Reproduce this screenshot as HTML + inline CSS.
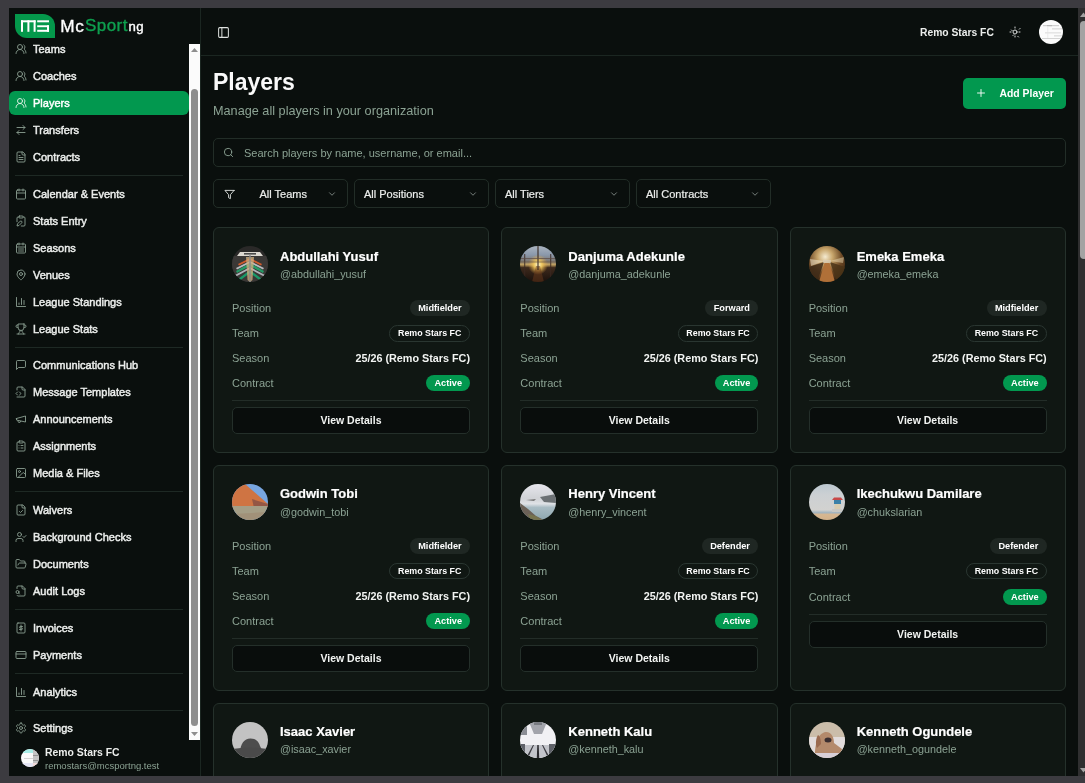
<!DOCTYPE html>
<html><head><meta charset="utf-8">
<style>
*{box-sizing:border-box;margin:0;padding:0}
html,body{width:1085px;height:783px;overflow:hidden;background:#3c3b40;font-family:"Liberation Sans",sans-serif;position:relative}
#root{position:absolute;left:0;top:0;width:1085px;height:783px;will-change:transform}
.abs{position:absolute}
</style></head>
<body><div id="root">
<div class="abs" style="left:9px;top:8px;width:1069px;height:768px;background:#0a0f0d"></div>
<div class="abs" style="left:9px;top:8px;width:191px;height:768px;background:#0a0f0d"></div>
<div class="abs" style="left:200px;top:8px;width:1px;height:768px;background:#1b2621"></div>
<div class="abs" style="left:15px;top:14px;width:40px;height:24px;background:#04984b;border-radius:0 12px 0 12px"></div>
<svg class="abs" style="left:15px;top:14px" width="40" height="24" viewBox="0 0 40 24"><g fill="#fff"><rect x="6" y="6.3" width="14.6" height="2"/><rect x="6" y="6.3" width="2" height="11.5"/><rect x="12.4" y="6.3" width="2" height="11.5"/><rect x="18.6" y="6.3" width="2" height="11.5"/><rect x="22.2" y="6.3" width="11.8" height="2"/><rect x="22.2" y="11.3" width="11.8" height="1.9"/><rect x="32" y="11.3" width="2" height="6.5"/><rect x="22.2" y="15.8" width="11.8" height="2"/></g></svg>
<div class="abs" style="left:60.3px;top:15.74px;font-size:17.2px;line-height:20px;color:#fff;letter-spacing:0.55px;-webkit-text-stroke:0.35px #fff;white-space:nowrap">Mc</div>
<div class="abs" style="left:85px;top:15.81px;font-size:17px;line-height:20px;color:#0ea04f;letter-spacing:0.45px;-webkit-text-stroke:0.35px #0ea04f;white-space:nowrap">Sport</div>
<div class="abs" style="left:128.5px;top:17.13px;font-size:13.2px;line-height:20px;color:#fff;letter-spacing:0.3px;-webkit-text-stroke:0.35px #fff;white-space:nowrap">ng</div>
<div class="abs" style="left:9px;top:44px;width:191px;height:696px;overflow:hidden">
<svg class="abs" style="left:5.5px;top:-1px" width="12" height="12" viewBox="0 0 24 24" fill="none" stroke="#8a9e91" stroke-width="1.8" stroke-linecap="round" stroke-linejoin="round"><path d="M18 21a8 8 0 0 0-16 0"/><circle cx="10" cy="8" r="5"/><path d="M22 20c0-3.37-2-6.5-4-8a5 5 0 0 0-.45-8.3"/></svg>
<div class="abs" style="left:24px;top:-2px;font-size:11px;line-height:14px;color:#eceeec;white-space:nowrap;-webkit-text-stroke:0.45px #eceeec">Teams</div>
<svg class="abs" style="left:5.5px;top:26px" width="12" height="12" viewBox="0 0 24 24" fill="none" stroke="#8a9e91" stroke-width="1.8" stroke-linecap="round" stroke-linejoin="round"><path d="M18 21a8 8 0 0 0-16 0"/><circle cx="10" cy="8" r="5"/><path d="M22 20c0-3.37-2-6.5-4-8a5 5 0 0 0-.45-8.3"/></svg>
<div class="abs" style="left:24px;top:25px;font-size:11px;line-height:14px;color:#eceeec;white-space:nowrap;-webkit-text-stroke:0.45px #eceeec">Coaches</div>
<div class="abs" style="left:0px;top:47px;width:180px;height:23.8px;background:#02984f;border-radius:6px"></div>
<svg class="abs" style="left:5.5px;top:53px" width="12" height="12" viewBox="0 0 24 24" fill="none" stroke="#e8f5ec" stroke-width="1.8" stroke-linecap="round" stroke-linejoin="round"><path d="M18 21a8 8 0 0 0-16 0"/><circle cx="10" cy="8" r="5"/><path d="M22 20c0-3.37-2-6.5-4-8a5 5 0 0 0-.45-8.3"/></svg>
<div class="abs" style="left:24px;top:52px;font-size:11px;line-height:14px;color:#ffffff;white-space:nowrap;-webkit-text-stroke:0.45px #ffffff">Players</div>
<svg class="abs" style="left:5.5px;top:80px" width="12" height="12" viewBox="0 0 24 24" fill="none" stroke="#8a9e91" stroke-width="1.8" stroke-linecap="round" stroke-linejoin="round"><path d="m16 3 4 4-4 4"/><path d="M20 7H4"/><path d="m8 21-4-4 4-4"/><path d="M4 17h16"/></svg>
<div class="abs" style="left:24px;top:79px;font-size:11px;line-height:14px;color:#eceeec;white-space:nowrap;-webkit-text-stroke:0.45px #eceeec">Transfers</div>
<svg class="abs" style="left:5.5px;top:107px" width="12" height="12" viewBox="0 0 24 24" fill="none" stroke="#8a9e91" stroke-width="1.8" stroke-linecap="round" stroke-linejoin="round"><path d="M15 2H6a2 2 0 0 0-2 2v16a2 2 0 0 0 2 2h12a2 2 0 0 0 2-2V7Z"/><path d="M14 2v4a2 2 0 0 0 2 2h4"/><path d="M10 9H8"/><path d="M16 13H8"/><path d="M16 17H8"/></svg>
<div class="abs" style="left:24px;top:106px;font-size:11px;line-height:14px;color:#eceeec;white-space:nowrap;-webkit-text-stroke:0.45px #eceeec">Contracts</div>
<svg class="abs" style="left:5.5px;top:144px" width="12" height="12" viewBox="0 0 24 24" fill="none" stroke="#8a9e91" stroke-width="1.8" stroke-linecap="round" stroke-linejoin="round"><rect width="18" height="18" x="3" y="4" rx="2"/><path d="M16 2v4"/><path d="M8 2v4"/><path d="M3 10h18"/></svg>
<div class="abs" style="left:24px;top:143px;font-size:11px;line-height:14px;color:#eceeec;white-space:nowrap;-webkit-text-stroke:0.45px #eceeec">Calendar &amp; Events</div>
<svg class="abs" style="left:5.5px;top:171px" width="12" height="12" viewBox="0 0 24 24" fill="none" stroke="#8a9e91" stroke-width="1.8" stroke-linecap="round" stroke-linejoin="round"><rect width="8" height="4" x="8" y="2" rx="1"/><path d="M10.4 12.6a2 2 0 0 1 3 3L8 21l-4 1 1-4Z"/><path d="M16 4h2a2 2 0 0 1 2 2v14a2 2 0 0 1-2 2h-5.5"/><path d="M4 13.5V6a2 2 0 0 1 2-2h2"/></svg>
<div class="abs" style="left:24px;top:170px;font-size:11px;line-height:14px;color:#eceeec;white-space:nowrap;-webkit-text-stroke:0.45px #eceeec">Stats Entry</div>
<svg class="abs" style="left:5.5px;top:198px" width="12" height="12" viewBox="0 0 24 24" fill="none" stroke="#8a9e91" stroke-width="1.8" stroke-linecap="round" stroke-linejoin="round"><rect width="18" height="18" x="3" y="4" rx="2"/><path d="M16 2v4M8 2v4M3 10h18M7 14h10M7 18h10"/></svg>
<div class="abs" style="left:24px;top:197px;font-size:11px;line-height:14px;color:#eceeec;white-space:nowrap;-webkit-text-stroke:0.45px #eceeec">Seasons</div>
<svg class="abs" style="left:5.5px;top:225px" width="12" height="12" viewBox="0 0 24 24" fill="none" stroke="#8a9e91" stroke-width="1.8" stroke-linecap="round" stroke-linejoin="round"><path d="M20 10c0 6-8 12-8 12s-8-6-8-12a8 8 0 0 1 16 0Z"/><circle cx="12" cy="10" r="3"/></svg>
<div class="abs" style="left:24px;top:224px;font-size:11px;line-height:14px;color:#eceeec;white-space:nowrap;-webkit-text-stroke:0.45px #eceeec">Venues</div>
<svg class="abs" style="left:5.5px;top:252px" width="12" height="12" viewBox="0 0 24 24" fill="none" stroke="#8a9e91" stroke-width="1.8" stroke-linecap="round" stroke-linejoin="round"><path d="M3 3v18h18"/><path d="M18 17V9"/><path d="M13 17V5"/><path d="M8 17v-3"/></svg>
<div class="abs" style="left:24px;top:251px;font-size:11px;line-height:14px;color:#eceeec;white-space:nowrap;-webkit-text-stroke:0.45px #eceeec">League Standings</div>
<svg class="abs" style="left:5.5px;top:279px" width="12" height="12" viewBox="0 0 24 24" fill="none" stroke="#8a9e91" stroke-width="1.8" stroke-linecap="round" stroke-linejoin="round"><path d="M6 9H4.5a2.5 2.5 0 0 1 0-5H6"/><path d="M18 9h1.5a2.5 2.5 0 0 0 0-5H18"/><path d="M4 22h16"/><path d="M10 14.66V17c0 .55-.47.98-.97 1.21C7.85 18.75 7 20.24 7 22"/><path d="M14 14.66V17c0 .55.47.98.97 1.21C16.15 18.75 17 20.24 17 22"/><path d="M18 2H6v7a6 6 0 0 0 12 0V2Z"/></svg>
<div class="abs" style="left:24px;top:278px;font-size:11px;line-height:14px;color:#eceeec;white-space:nowrap;-webkit-text-stroke:0.45px #eceeec">League Stats</div>
<svg class="abs" style="left:5.5px;top:315px" width="12" height="12" viewBox="0 0 24 24" fill="none" stroke="#8a9e91" stroke-width="1.8" stroke-linecap="round" stroke-linejoin="round"><path d="M21 15a2 2 0 0 1-2 2H7l-4 4V5a2 2 0 0 1 2-2h14a2 2 0 0 1 2 2z"/></svg>
<div class="abs" style="left:24px;top:314px;font-size:11px;line-height:14px;color:#eceeec;white-space:nowrap;-webkit-text-stroke:0.45px #eceeec">Communications Hub</div>
<svg class="abs" style="left:5.5px;top:342px" width="12" height="12" viewBox="0 0 24 24" fill="none" stroke="#8a9e91" stroke-width="1.8" stroke-linecap="round" stroke-linejoin="round"><path d="M4 22h14a2 2 0 0 0 2-2V7l-5-5H6a2 2 0 0 0-2 2v4"/><path d="M14 2v4a2 2 0 0 0 2 2h4"/><path d="m5 12-3 3 3 3"/><path d="m9 18 3-3-3-3"/></svg>
<div class="abs" style="left:24px;top:341px;font-size:11px;line-height:14px;color:#eceeec;white-space:nowrap;-webkit-text-stroke:0.45px #eceeec">Message Templates</div>
<svg class="abs" style="left:5.5px;top:369px" width="12" height="12" viewBox="0 0 24 24" fill="none" stroke="#8a9e91" stroke-width="1.8" stroke-linecap="round" stroke-linejoin="round"><path d="m3 11 18-5v12L3 14v-3z"/><path d="M11.6 16.8a3 3 0 1 1-5.8-1.6"/></svg>
<div class="abs" style="left:24px;top:368px;font-size:11px;line-height:14px;color:#eceeec;white-space:nowrap;-webkit-text-stroke:0.45px #eceeec">Announcements</div>
<svg class="abs" style="left:5.5px;top:396px" width="12" height="12" viewBox="0 0 24 24" fill="none" stroke="#8a9e91" stroke-width="1.8" stroke-linecap="round" stroke-linejoin="round"><rect width="8" height="4" x="8" y="2" rx="1"/><path d="M16 4h2a2 2 0 0 1 2 2v14a2 2 0 0 1-2 2H6a2 2 0 0 1-2-2V6a2 2 0 0 1 2-2h2"/><path d="M12 11h4M12 16h4M8 11h.01M8 16h.01"/></svg>
<div class="abs" style="left:24px;top:395px;font-size:11px;line-height:14px;color:#eceeec;white-space:nowrap;-webkit-text-stroke:0.45px #eceeec">Assignments</div>
<svg class="abs" style="left:5.5px;top:423px" width="12" height="12" viewBox="0 0 24 24" fill="none" stroke="#8a9e91" stroke-width="1.8" stroke-linecap="round" stroke-linejoin="round"><rect width="18" height="18" x="3" y="3" rx="2"/><circle cx="9" cy="9" r="2"/><path d="m21 15-3.086-3.086a2 2 0 0 0-2.828 0L6 21"/></svg>
<div class="abs" style="left:24px;top:422px;font-size:11px;line-height:14px;color:#eceeec;white-space:nowrap;-webkit-text-stroke:0.45px #eceeec">Media &amp; Files</div>
<svg class="abs" style="left:5.5px;top:460px" width="12" height="12" viewBox="0 0 24 24" fill="none" stroke="#8a9e91" stroke-width="1.8" stroke-linecap="round" stroke-linejoin="round"><path d="M15 2H6a2 2 0 0 0-2 2v16a2 2 0 0 0 2 2h12a2 2 0 0 0 2-2V7Z"/><path d="M14 2v4a2 2 0 0 0 2 2h4"/><path d="m9 15 2 2 4-4"/></svg>
<div class="abs" style="left:24px;top:459px;font-size:11px;line-height:14px;color:#eceeec;white-space:nowrap;-webkit-text-stroke:0.45px #eceeec">Waivers</div>
<svg class="abs" style="left:5.5px;top:487px" width="12" height="12" viewBox="0 0 24 24" fill="none" stroke="#8a9e91" stroke-width="1.8" stroke-linecap="round" stroke-linejoin="round"><path d="M16 21v-2a4 4 0 0 0-4-4H6a4 4 0 0 0-4 4v2"/><circle cx="9" cy="7" r="4"/><polyline points="16 11 18 13 22 9"/></svg>
<div class="abs" style="left:24px;top:486px;font-size:11px;line-height:14px;color:#eceeec;white-space:nowrap;-webkit-text-stroke:0.45px #eceeec">Background Checks</div>
<svg class="abs" style="left:5.5px;top:514px" width="12" height="12" viewBox="0 0 24 24" fill="none" stroke="#8a9e91" stroke-width="1.8" stroke-linecap="round" stroke-linejoin="round"><path d="m6 14 1.5-2.9A2 2 0 0 1 9.24 10H20a2 2 0 0 1 1.94 2.5l-1.54 6a2 2 0 0 1-1.95 1.5H4a2 2 0 0 1-2-2V5a2 2 0 0 1 2-2h3.9a2 2 0 0 1 1.69.9l.81 1.2a2 2 0 0 0 1.67.9H18a2 2 0 0 1 2 2v2"/></svg>
<div class="abs" style="left:24px;top:513px;font-size:11px;line-height:14px;color:#eceeec;white-space:nowrap;-webkit-text-stroke:0.45px #eceeec">Documents</div>
<svg class="abs" style="left:5.5px;top:541px" width="12" height="12" viewBox="0 0 24 24" fill="none" stroke="#8a9e91" stroke-width="1.8" stroke-linecap="round" stroke-linejoin="round"><path d="M14 2v4a2 2 0 0 0 2 2h4"/><path d="M4.268 21a2 2 0 0 0 1.727 1H18a2 2 0 0 0 2-2V7l-5-5H6a2 2 0 0 0-2 2v3"/><path d="m9 18-1.5-1.5"/><circle cx="5" cy="14" r="3"/></svg>
<div class="abs" style="left:24px;top:540px;font-size:11px;line-height:14px;color:#eceeec;white-space:nowrap;-webkit-text-stroke:0.45px #eceeec">Audit Logs</div>
<svg class="abs" style="left:5.5px;top:578px" width="12" height="12" viewBox="0 0 24 24" fill="none" stroke="#8a9e91" stroke-width="1.8" stroke-linecap="round" stroke-linejoin="round"><rect x="4" y="2" width="16" height="20" rx="2"/><path d="M12 6v12M15 9h-4.5a1.5 1.5 0 0 0 0 3h3a1.5 1.5 0 0 1 0 3H9"/></svg>
<div class="abs" style="left:24px;top:577px;font-size:11px;line-height:14px;color:#eceeec;white-space:nowrap;-webkit-text-stroke:0.45px #eceeec">Invoices</div>
<svg class="abs" style="left:5.5px;top:605px" width="12" height="12" viewBox="0 0 24 24" fill="none" stroke="#8a9e91" stroke-width="1.8" stroke-linecap="round" stroke-linejoin="round"><rect width="20" height="14" x="2" y="5" rx="2"/><line x1="2" x2="22" y1="10" y2="10"/></svg>
<div class="abs" style="left:24px;top:604px;font-size:11px;line-height:14px;color:#eceeec;white-space:nowrap;-webkit-text-stroke:0.45px #eceeec">Payments</div>
<svg class="abs" style="left:5.5px;top:642px" width="12" height="12" viewBox="0 0 24 24" fill="none" stroke="#8a9e91" stroke-width="1.8" stroke-linecap="round" stroke-linejoin="round"><path d="M3 3v18h18"/><path d="M18 17V9"/><path d="M13 17V5"/><path d="M8 17v-3"/></svg>
<div class="abs" style="left:24px;top:641px;font-size:11px;line-height:14px;color:#eceeec;white-space:nowrap;-webkit-text-stroke:0.45px #eceeec">Analytics</div>
<svg class="abs" style="left:5.5px;top:678px" width="12" height="12" viewBox="0 0 24 24" fill="none" stroke="#8a9e91" stroke-width="1.8" stroke-linecap="round" stroke-linejoin="round"><path d="M12.22 2h-.44a2 2 0 0 0-2 2v.18a2 2 0 0 1-1 1.73l-.43.25a2 2 0 0 1-2 0l-.15-.08a2 2 0 0 0-2.73.73l-.22.38a2 2 0 0 0 .73 2.73l.15.1a2 2 0 0 1 1 1.72v.51a2 2 0 0 1-1 1.74l-.15.09a2 2 0 0 0-.73 2.73l.22.38a2 2 0 0 0 2.73.73l.15-.08a2 2 0 0 1 2 0l.43.25a2 2 0 0 1 1 1.73V20a2 2 0 0 0 2 2h.44a2 2 0 0 0 2-2v-.18a2 2 0 0 1 1-1.73l.43-.25a2 2 0 0 1 2 0l.15.08a2 2 0 0 0 2.73-.73l.22-.39a2 2 0 0 0-.73-2.73l-.15-.08a2 2 0 0 1-1-1.74v-.5a2 2 0 0 1 1-1.74l.15-.09a2 2 0 0 0 .73-2.73l-.22-.38a2 2 0 0 0-2.73-.73l-.15.08a2 2 0 0 1-2 0l-.43-.25a2 2 0 0 1-1-1.73V4a2 2 0 0 0-2-2z"/><circle cx="12" cy="12" r="3"/></svg>
<div class="abs" style="left:24px;top:677px;font-size:11px;line-height:14px;color:#eceeec;white-space:nowrap;-webkit-text-stroke:0.45px #eceeec">Settings</div>
<div class="abs" style="left:6px;top:131.0px;width:168px;height:1px;background:#1e2924"></div>
<div class="abs" style="left:6px;top:302.5px;width:168px;height:1px;background:#1e2924"></div>
<div class="abs" style="left:6px;top:446.5px;width:168px;height:1px;background:#1e2924"></div>
<div class="abs" style="left:6px;top:564.5px;width:168px;height:1px;background:#1e2924"></div>
<div class="abs" style="left:6px;top:628.5px;width:168px;height:1px;background:#1e2924"></div>
<div class="abs" style="left:6px;top:665.5px;width:168px;height:1px;background:#1e2924"></div>
</div>
<div class="abs" style="left:189px;top:44px;width:11px;height:696px;background:#fbfbfb"></div>
<div class="abs" style="left:191px;top:89px;width:7px;height:637px;background:#8e8e8e;border-radius:4px"></div>
<svg class="abs" style="left:190px;top:47px" width="9" height="6" viewBox="0 0 9 6"><path d="M4.5 1 8 5H1z" fill="#8e8e8e"/></svg>
<svg class="abs" style="left:190px;top:731px" width="9" height="6" viewBox="0 0 9 6"><path d="M4.5 5 8 1H1z" fill="#8e8e8e"/></svg>
<svg class="abs" style="left:21px;top:749px" width="18" height="18" viewBox="0 0 18 18"><defs><clipPath id="fav"><circle cx="9" cy="9" r="9"/></clipPath></defs><g clip-path="url(#fav)"><rect width="18" height="18" fill="#fafafa"/><rect width="12" height="4" fill="#a8ece6"/><rect x="12" y="0" width="6" height="18" fill="#c4c4c4"/><rect x="0" y="14" width="12" height="4" fill="#e4e4f4"/><rect x="12" y="14" width="6" height="4" fill="#f0d8d8"/><rect x="3" y="9" width="9" height="0.6" fill="#bbb"/><rect x="12" y="6" width="6" height="0.8" fill="#888"/><rect x="12" y="11" width="6" height="0.8" fill="#888"/></g></svg>
<div class="abs" style="left:45px;top:746px;font-size:10.4px;line-height:14px;color:#eceeec;font-weight:bold;white-space:nowrap">Remo Stars FC</div>
<div class="abs" style="left:45px;top:760px;font-size:9.5px;line-height:12px;color:#8ba293;white-space:nowrap">remostars@mcsportng.test</div>
<div class="abs" style="left:201px;top:55px;width:877px;height:1px;background:#1b2621"></div>
<svg class="abs" style="left:217px;top:25.5px" width="13" height="13" viewBox="0 0 24 24" fill="none" stroke="#dfe2e0" stroke-width="1.85" stroke-linecap="round" stroke-linejoin="round"><rect width="18" height="18" x="3" y="3" rx="2"/><path d="M9 3v18"/></svg>
<div class="abs" style="left:920px;top:26.3px;font-size:10.3px;line-height:14px;font-weight:bold;color:#eceeec;white-space:nowrap">Remo Stars FC</div>
<svg class="abs" style="left:1008.5px;top:26px" width="12" height="12" viewBox="0 0 24 24" fill="none" stroke="#d9dcda" stroke-width="2" stroke-linecap="round" stroke-linejoin="round"><circle cx="12" cy="12" r="4"/><path d="M12 2v2M12 20v2m-7.07-14.07 1.41 1.41m11.32 11.32 1.41 1.41M2 12h2M20 12h2m-14.07 7.07 1.41-1.41m11.32-11.32 1.41-1.41"/></svg>
<svg class="abs" style="left:1038.75px;top:19.9px" width="24" height="24" viewBox="0 0 24 24"><defs><clipPath id="hav"><circle cx="12" cy="12" r="12"/></clipPath></defs><g clip-path="url(#hav)"><rect width="24" height="24" fill="#fbfbfb"/><rect x="4" y="5" width="16" height="1.2" fill="#d0d0d0"/><rect x="8" y="5" width="5" height="1.2" fill="#b8b8b8"/><rect x="13" y="8.5" width="10" height="0.8" fill="#c8c8c8"/><rect x="6" y="12.5" width="16" height="0.8" fill="#cfcfcf"/><rect x="15" y="15.5" width="8" height="0.8" fill="#c8c8c8"/><rect x="3" y="18" width="19" height="1" fill="#d4d4d4"/><rect x="8.5" y="6" width="0.7" height="12" fill="#e4e4e4"/></g></svg>
<div class="abs" style="left:213px;top:68px;font-size:23px;line-height:28px;font-weight:bold;color:#fafafa;white-space:nowrap">Players</div>
<div class="abs" style="left:213px;top:103px;font-size:12.7px;line-height:16px;color:#8ba293;white-space:nowrap">Manage all players in your organization</div>
<div class="abs" style="left:963px;top:78px;width:103px;height:30.5px;background:#02984f;border-radius:5px"></div>
<svg class="abs" style="left:975px;top:87px" width="12" height="12" viewBox="0 0 24 24" fill="none" stroke="#ffffff" stroke-width="1.8" stroke-linecap="round" stroke-linejoin="round"><path d="M5 12h14M12 5v14"/></svg>
<div class="abs" style="left:999.5px;top:87px;font-size:10.4px;line-height:14px;font-weight:bold;color:#fff;white-space:nowrap">Add Player</div>
<div class="abs" style="left:213px;top:137.5px;width:853px;height:29px;border:1px solid #222d27;border-radius:5px;background:#0a0f0d"></div>
<svg class="abs" style="left:222.5px;top:146.5px" width="11" height="11" viewBox="0 0 24 24" fill="none" stroke="#8ba293" stroke-width="2" stroke-linecap="round" stroke-linejoin="round"><circle cx="11" cy="11" r="8"/><path d="m21 21-4.3-4.3"/></svg>
<div class="abs" style="left:244px;top:146px;font-size:11px;line-height:14px;color:#8ba293;white-space:nowrap">Search players by name, username, or email...</div>
<div class="abs" style="left:213px;top:179px;width:134.5px;height:29px;border:1px solid #222d27;border-radius:5px"></div>
<svg class="abs" style="left:223.5px;top:188.5px" width="11" height="11" viewBox="0 0 24 24" fill="none" stroke="#dfe2e0" stroke-width="2" stroke-linecap="round" stroke-linejoin="round"><polygon points="22 3 2 3 10 12.46 10 19 14 21 14 12.46 22 3"/></svg>
<div class="abs" style="left:259.5px;top:187px;font-size:11px;line-height:14px;color:#eceeec;white-space:nowrap;-webkit-text-stroke:0.2px #eceeec">All Teams</div>
<svg class="abs" style="left:327px;top:189px" width="10" height="10" viewBox="0 0 24 24" fill="none" stroke="#8a948f" stroke-width="2" stroke-linecap="round" stroke-linejoin="round"><path d="m6 9 6 6 6-6"/></svg>
<div class="abs" style="left:354.3px;top:179px;width:134.5px;height:29px;border:1px solid #222d27;border-radius:5px"></div>
<div class="abs" style="left:364px;top:187px;font-size:11px;line-height:14px;color:#eceeec;white-space:nowrap;-webkit-text-stroke:0.2px #eceeec">All Positions</div>
<svg class="abs" style="left:468.3px;top:189px" width="10" height="10" viewBox="0 0 24 24" fill="none" stroke="#8a948f" stroke-width="2" stroke-linecap="round" stroke-linejoin="round"><path d="m6 9 6 6 6-6"/></svg>
<div class="abs" style="left:495.3px;top:179px;width:134.5px;height:29px;border:1px solid #222d27;border-radius:5px"></div>
<div class="abs" style="left:505px;top:187px;font-size:11px;line-height:14px;color:#eceeec;white-space:nowrap;-webkit-text-stroke:0.2px #eceeec">All Tiers</div>
<svg class="abs" style="left:609.3px;top:189px" width="10" height="10" viewBox="0 0 24 24" fill="none" stroke="#8a948f" stroke-width="2" stroke-linecap="round" stroke-linejoin="round"><path d="m6 9 6 6 6-6"/></svg>
<div class="abs" style="left:636.3px;top:179px;width:134.5px;height:29px;border:1px solid #222d27;border-radius:5px"></div>
<div class="abs" style="left:646px;top:187px;font-size:11px;line-height:14px;color:#eceeec;white-space:nowrap;-webkit-text-stroke:0.2px #eceeec">All Contracts</div>
<svg class="abs" style="left:750.3px;top:189px" width="10" height="10" viewBox="0 0 24 24" fill="none" stroke="#8a948f" stroke-width="2" stroke-linecap="round" stroke-linejoin="round"><path d="m6 9 6 6 6-6"/></svg>
<div class="abs" style="left:213.00px;top:227px;width:276.33px;height:225.8px;background:#101713;border:1px solid #25312b;border-radius:6px"></div>
<svg class="abs" style="left:232.00px;top:246px" width="36" height="36" viewBox="0 0 36 36"><defs><clipPath id="c0"><circle cx="18" cy="18" r="18"/></clipPath></defs><g clip-path="url(#c0)"><rect width="36" height="36" fill="#2a2928"/><rect x="0" y="10" width="36" height="26" fill="#3a3836"/><path d="M8 6 L28 6 L31 10 L5 10Z" fill="#dcd8d0"/><rect x="12" y="7" width="12" height="1.6" fill="#4a4a4a"/><path d="M18 12 L6 18 L7 19.5 L18 14 L29 19.5 L30 18Z" fill="#d05a2c"/><path d="M18 15 L4 22 L5 23.5 L18 17 L31 23.5 L32 22Z" fill="#b8bcc0"/><path d="M18 17 L4 25 L5 27 L18 20 L31 27 L32 25Z" fill="#259a66"/><path d="M18 21 L3 29 L4 30.5 L18 23 L32 30.5 L33 29Z" fill="#aeb2b8"/><path d="M18 24 L6 33 L8 34.5 L18 27 L28 34.5 L30 33Z" fill="#1a9868"/><path d="M14 11 L15.5 34 L18 36 L20.5 34 L22 11Z" fill="#d2b080" opacity=".75"/><rect x="17.3" y="9" width="1.4" height="27" fill="#8a8a88"/></g></svg>
<div class="abs" style="left:280.00px;top:248.50px;line-height:16px;font-size:13px;font-weight:bold;color:#ffffff;-webkit-text-stroke:0.2px #fff;white-space:nowrap">Abdullahi Yusuf</div>
<div class="abs" style="left:280.00px;top:267.76px;line-height:13px;font-size:10.8px;color:#8ba293;white-space:nowrap">@abdullahi_yusuf</div>
<div class="abs" style="left:232.00px;top:301.99px;line-height:13px;font-size:11px;color:#8ba293;white-space:nowrap">Position</div>
<div class="abs" style="right:615.00px;top:300.3px;height:16px;padding:0 8.4px;border-radius:8px;background:#1f2723;color:#fff;font-size:9.2px;line-height:16px;font-weight:bold;white-space:nowrap">Midfielder</div>
<div class="abs" style="left:232.00px;top:327.09px;line-height:13px;font-size:11px;color:#8ba293;white-space:nowrap">Team</div>
<div class="abs" style="right:615.00px;top:325.09999999999997px;height:16.6px;padding:0 7.6px;border-radius:8.3px;border:1px solid #2a3631;color:#fff;font-size:8.85px;line-height:14.6px;font-weight:bold;white-space:nowrap">Remo Stars FC</div>
<div class="abs" style="left:232.00px;top:352.09px;line-height:13px;font-size:11px;color:#8ba293;white-space:nowrap">Season</div>
<div class="abs" style="right:615.00px;top:352.09px;line-height:13px;font-size:10.8px;font-weight:bold;color:#f2f4f2;white-space:nowrap">25/26 (Remo Stars FC)</div>
<div class="abs" style="left:232.00px;top:376.79px;line-height:13px;font-size:11px;color:#8ba293;white-space:nowrap">Contract</div>
<div class="abs" style="right:615.00px;top:374.90000000000003px;height:16px;padding:0 8px;border-radius:8px;background:#02984f;color:#fff;font-size:9.2px;line-height:16px;font-weight:bold;white-space:nowrap">Active</div>
<div class="abs" style="left:232.00px;top:400.30px;width:238px;height:1px;background:#232d28"></div>
<div class="abs" style="left:232.00px;top:407.40px;width:238px;height:26.7px;background:#090d0c;border:1px solid #242f2a;border-radius:5px;color:#f2f4f2;font-size:10.5px;font-weight:bold;line-height:24.7px;text-align:center">View Details</div>
<div class="abs" style="left:501.33px;top:227px;width:276.33px;height:225.8px;background:#101713;border:1px solid #25312b;border-radius:6px"></div>
<svg class="abs" style="left:520.33px;top:246px" width="36" height="36" viewBox="0 0 36 36"><defs><clipPath id="c1"><circle cx="18" cy="18" r="18"/></clipPath></defs><g clip-path="url(#c1)"><defs><linearGradient id="gdan" x1="0" y1="0" x2="0" y2="1"><stop offset="0" stop-color="#aab4c0"/><stop offset="0.25" stop-color="#8a98aa"/><stop offset="0.42" stop-color="#7c7670"/><stop offset="0.52" stop-color="#c0a060"/><stop offset="0.6" stop-color="#3e2a1c"/><stop offset="1" stop-color="#1a100c"/></linearGradient><radialGradient id="gdan2" cx="0.5" cy="0.52" r="0.28"><stop offset="0" stop-color="#fff8d0"/><stop offset="0.4" stop-color="#f4cc60" stop-opacity=".9"/><stop offset="1" stop-color="#e0a040" stop-opacity="0"/></radialGradient></defs><rect width="36" height="36" fill="url(#gdan)"/><rect width="36" height="36" fill="url(#gdan2)"/><path d="M16 20 L20 20 L24 36 L12 36Z" fill="#6a3a1c" opacity=".5"/><rect x="17.3" y="0" width="1.4" height="24" fill="#3a2a22" opacity=".8"/><rect x="4" y="8" width="1.3" height="28" fill="#3a2a22" opacity=".7"/><rect x="30" y="8" width="1.3" height="28" fill="#3a2a22" opacity=".7"/><rect x="0" y="12" width="36" height="1" fill="#5a4a44" opacity=".7"/><rect x="0" y="15.5" width="36" height="1" fill="#5a4a44" opacity=".6"/></g></svg>
<div class="abs" style="left:568.33px;top:248.50px;line-height:16px;font-size:13px;font-weight:bold;color:#ffffff;-webkit-text-stroke:0.2px #fff;white-space:nowrap">Danjuma Adekunle</div>
<div class="abs" style="left:568.33px;top:267.76px;line-height:13px;font-size:10.8px;color:#8ba293;white-space:nowrap">@danjuma_adekunle</div>
<div class="abs" style="left:520.33px;top:301.99px;line-height:13px;font-size:11px;color:#8ba293;white-space:nowrap">Position</div>
<div class="abs" style="right:326.67px;top:300.3px;height:16px;padding:0 8.4px;border-radius:8px;background:#1f2723;color:#fff;font-size:9.2px;line-height:16px;font-weight:bold;white-space:nowrap">Forward</div>
<div class="abs" style="left:520.33px;top:327.09px;line-height:13px;font-size:11px;color:#8ba293;white-space:nowrap">Team</div>
<div class="abs" style="right:326.67px;top:325.09999999999997px;height:16.6px;padding:0 7.6px;border-radius:8.3px;border:1px solid #2a3631;color:#fff;font-size:8.85px;line-height:14.6px;font-weight:bold;white-space:nowrap">Remo Stars FC</div>
<div class="abs" style="left:520.33px;top:352.09px;line-height:13px;font-size:11px;color:#8ba293;white-space:nowrap">Season</div>
<div class="abs" style="right:326.67px;top:352.09px;line-height:13px;font-size:10.8px;font-weight:bold;color:#f2f4f2;white-space:nowrap">25/26 (Remo Stars FC)</div>
<div class="abs" style="left:520.33px;top:376.79px;line-height:13px;font-size:11px;color:#8ba293;white-space:nowrap">Contract</div>
<div class="abs" style="right:326.67px;top:374.90000000000003px;height:16px;padding:0 8px;border-radius:8px;background:#02984f;color:#fff;font-size:9.2px;line-height:16px;font-weight:bold;white-space:nowrap">Active</div>
<div class="abs" style="left:520.33px;top:400.30px;width:238px;height:1px;background:#232d28"></div>
<div class="abs" style="left:520.33px;top:407.40px;width:238px;height:26.7px;background:#090d0c;border:1px solid #242f2a;border-radius:5px;color:#f2f4f2;font-size:10.5px;font-weight:bold;line-height:24.7px;text-align:center">View Details</div>
<div class="abs" style="left:789.66px;top:227px;width:276.33px;height:225.8px;background:#101713;border:1px solid #25312b;border-radius:6px"></div>
<svg class="abs" style="left:808.66px;top:246px" width="36" height="36" viewBox="0 0 36 36"><defs><clipPath id="c2"><circle cx="18" cy="18" r="18"/></clipPath></defs><g clip-path="url(#c2)"><defs><radialGradient id="geme" cx="0.45" cy="0.3" r="0.7"><stop offset="0" stop-color="#f4ead0"/><stop offset="0.3" stop-color="#c8a66c"/><stop offset="0.65" stop-color="#6e4a26"/><stop offset="1" stop-color="#3a2412"/></radialGradient></defs><rect width="36" height="36" fill="url(#geme)"/><path d="M15.5 17 L20.5 17 L26 36 L10 36Z" fill="#b07038"/><path d="M0 21 L15 16 L8 36 L0 36Z" fill="#3e2a18" opacity=".85"/><path d="M36 21 L21 16 L28 36 L36 36Z" fill="#4a3418" opacity=".85"/><path d="M1 13 L15 15 L2 20Z" fill="#efe4cc" opacity=".55"/><path d="M35 11 L21 15 L34 17Z" fill="#e8d8b0" opacity=".5"/><rect x="14" y="14" width="8" height="3" fill="#d8d0c0" opacity=".6"/></g></svg>
<div class="abs" style="left:856.66px;top:248.50px;line-height:16px;font-size:13px;font-weight:bold;color:#ffffff;-webkit-text-stroke:0.2px #fff;white-space:nowrap">Emeka Emeka</div>
<div class="abs" style="left:856.66px;top:267.76px;line-height:13px;font-size:10.8px;color:#8ba293;white-space:nowrap">@emeka_emeka</div>
<div class="abs" style="left:808.66px;top:301.99px;line-height:13px;font-size:11px;color:#8ba293;white-space:nowrap">Position</div>
<div class="abs" style="right:38.34px;top:300.3px;height:16px;padding:0 8.4px;border-radius:8px;background:#1f2723;color:#fff;font-size:9.2px;line-height:16px;font-weight:bold;white-space:nowrap">Midfielder</div>
<div class="abs" style="left:808.66px;top:327.09px;line-height:13px;font-size:11px;color:#8ba293;white-space:nowrap">Team</div>
<div class="abs" style="right:38.34px;top:325.09999999999997px;height:16.6px;padding:0 7.6px;border-radius:8.3px;border:1px solid #2a3631;color:#fff;font-size:8.85px;line-height:14.6px;font-weight:bold;white-space:nowrap">Remo Stars FC</div>
<div class="abs" style="left:808.66px;top:352.09px;line-height:13px;font-size:11px;color:#8ba293;white-space:nowrap">Season</div>
<div class="abs" style="right:38.34px;top:352.09px;line-height:13px;font-size:10.8px;font-weight:bold;color:#f2f4f2;white-space:nowrap">25/26 (Remo Stars FC)</div>
<div class="abs" style="left:808.66px;top:376.79px;line-height:13px;font-size:11px;color:#8ba293;white-space:nowrap">Contract</div>
<div class="abs" style="right:38.34px;top:374.90000000000003px;height:16px;padding:0 8px;border-radius:8px;background:#02984f;color:#fff;font-size:9.2px;line-height:16px;font-weight:bold;white-space:nowrap">Active</div>
<div class="abs" style="left:808.66px;top:400.30px;width:238px;height:1px;background:#232d28"></div>
<div class="abs" style="left:808.66px;top:407.40px;width:238px;height:26.7px;background:#090d0c;border:1px solid #242f2a;border-radius:5px;color:#f2f4f2;font-size:10.5px;font-weight:bold;line-height:24.7px;text-align:center">View Details</div>
<div class="abs" style="left:213.00px;top:464.75px;width:276.33px;height:225.8px;background:#101713;border:1px solid #25312b;border-radius:6px"></div>
<svg class="abs" style="left:232.00px;top:483.75px" width="36" height="36" viewBox="0 0 36 36"><defs><clipPath id="c3"><circle cx="18" cy="18" r="18"/></clipPath></defs><g clip-path="url(#c3)"><rect width="36" height="36" fill="#78a6e0"/><path d="M0 0 L13 0 L36 20 L36 24 L0 24Z" fill="#cf7443"/><path d="M20 15 L36 20 L36 24 L22 24Z" fill="#7a4a45" opacity=".7"/><path d="M0 22 L36 22 L36 36 L0 36Z" fill="#a59e86"/><path d="M0 30 L36 28 L36 36 L0 36Z" fill="#a08c74" opacity=".7"/></g></svg>
<div class="abs" style="left:280.00px;top:486.25px;line-height:16px;font-size:13px;font-weight:bold;color:#ffffff;-webkit-text-stroke:0.2px #fff;white-space:nowrap">Godwin Tobi</div>
<div class="abs" style="left:280.00px;top:505.51px;line-height:13px;font-size:10.8px;color:#8ba293;white-space:nowrap">@godwin_tobi</div>
<div class="abs" style="left:232.00px;top:539.74px;line-height:13px;font-size:11px;color:#8ba293;white-space:nowrap">Position</div>
<div class="abs" style="right:615.00px;top:538.05px;height:16px;padding:0 8.4px;border-radius:8px;background:#1f2723;color:#fff;font-size:9.2px;line-height:16px;font-weight:bold;white-space:nowrap">Midfielder</div>
<div class="abs" style="left:232.00px;top:564.84px;line-height:13px;font-size:11px;color:#8ba293;white-space:nowrap">Team</div>
<div class="abs" style="right:615.00px;top:562.85px;height:16.6px;padding:0 7.6px;border-radius:8.3px;border:1px solid #2a3631;color:#fff;font-size:8.85px;line-height:14.6px;font-weight:bold;white-space:nowrap">Remo Stars FC</div>
<div class="abs" style="left:232.00px;top:589.84px;line-height:13px;font-size:11px;color:#8ba293;white-space:nowrap">Season</div>
<div class="abs" style="right:615.00px;top:589.84px;line-height:13px;font-size:10.8px;font-weight:bold;color:#f2f4f2;white-space:nowrap">25/26 (Remo Stars FC)</div>
<div class="abs" style="left:232.00px;top:614.54px;line-height:13px;font-size:11px;color:#8ba293;white-space:nowrap">Contract</div>
<div class="abs" style="right:615.00px;top:612.65px;height:16px;padding:0 8px;border-radius:8px;background:#02984f;color:#fff;font-size:9.2px;line-height:16px;font-weight:bold;white-space:nowrap">Active</div>
<div class="abs" style="left:232.00px;top:638.05px;width:238px;height:1px;background:#232d28"></div>
<div class="abs" style="left:232.00px;top:645.15px;width:238px;height:26.7px;background:#090d0c;border:1px solid #242f2a;border-radius:5px;color:#f2f4f2;font-size:10.5px;font-weight:bold;line-height:24.7px;text-align:center">View Details</div>
<div class="abs" style="left:501.33px;top:464.75px;width:276.33px;height:225.8px;background:#101713;border:1px solid #25312b;border-radius:6px"></div>
<svg class="abs" style="left:520.33px;top:483.75px" width="36" height="36" viewBox="0 0 36 36"><defs><clipPath id="c4"><circle cx="18" cy="18" r="18"/></clipPath></defs><g clip-path="url(#c4)"><defs><linearGradient id="ghen" x1="0" y1="0" x2="0" y2="1"><stop offset="0" stop-color="#e6e6ec"/><stop offset="0.4" stop-color="#d0d2d6"/><stop offset="0.55" stop-color="#dfe2e6"/><stop offset="0.65" stop-color="#a9bcc4"/><stop offset="1" stop-color="#8ea7af"/></linearGradient></defs><rect width="36" height="36" fill="url(#ghen)"/><path d="M20 13 L36 10 L36 19 L24 18Z" fill="#6c7174"/><path d="M6 16 L16 15 L14 17Z" fill="#777"/><path d="M0 19 L8 25 L16 32 L24 36 L0 36Z" fill="#6b6157"/><path d="M8 30 L16 32 L22 36 L10 36Z" fill="#7a7a4a" opacity=".7"/></g></svg>
<div class="abs" style="left:568.33px;top:486.25px;line-height:16px;font-size:13px;font-weight:bold;color:#ffffff;-webkit-text-stroke:0.2px #fff;white-space:nowrap">Henry Vincent</div>
<div class="abs" style="left:568.33px;top:505.51px;line-height:13px;font-size:10.8px;color:#8ba293;white-space:nowrap">@henry_vincent</div>
<div class="abs" style="left:520.33px;top:539.74px;line-height:13px;font-size:11px;color:#8ba293;white-space:nowrap">Position</div>
<div class="abs" style="right:326.67px;top:538.05px;height:16px;padding:0 8.4px;border-radius:8px;background:#1f2723;color:#fff;font-size:9.2px;line-height:16px;font-weight:bold;white-space:nowrap">Defender</div>
<div class="abs" style="left:520.33px;top:564.84px;line-height:13px;font-size:11px;color:#8ba293;white-space:nowrap">Team</div>
<div class="abs" style="right:326.67px;top:562.85px;height:16.6px;padding:0 7.6px;border-radius:8.3px;border:1px solid #2a3631;color:#fff;font-size:8.85px;line-height:14.6px;font-weight:bold;white-space:nowrap">Remo Stars FC</div>
<div class="abs" style="left:520.33px;top:589.84px;line-height:13px;font-size:11px;color:#8ba293;white-space:nowrap">Season</div>
<div class="abs" style="right:326.67px;top:589.84px;line-height:13px;font-size:10.8px;font-weight:bold;color:#f2f4f2;white-space:nowrap">25/26 (Remo Stars FC)</div>
<div class="abs" style="left:520.33px;top:614.54px;line-height:13px;font-size:11px;color:#8ba293;white-space:nowrap">Contract</div>
<div class="abs" style="right:326.67px;top:612.65px;height:16px;padding:0 8px;border-radius:8px;background:#02984f;color:#fff;font-size:9.2px;line-height:16px;font-weight:bold;white-space:nowrap">Active</div>
<div class="abs" style="left:520.33px;top:638.05px;width:238px;height:1px;background:#232d28"></div>
<div class="abs" style="left:520.33px;top:645.15px;width:238px;height:26.7px;background:#090d0c;border:1px solid #242f2a;border-radius:5px;color:#f2f4f2;font-size:10.5px;font-weight:bold;line-height:24.7px;text-align:center">View Details</div>
<div class="abs" style="left:789.66px;top:464.75px;width:276.33px;height:225.8px;background:#101713;border:1px solid #25312b;border-radius:6px"></div>
<svg class="abs" style="left:808.66px;top:483.75px" width="36" height="36" viewBox="0 0 36 36"><defs><clipPath id="c5"><circle cx="18" cy="18" r="18"/></clipPath></defs><g clip-path="url(#c5)"><defs><linearGradient id="gike" x1="0" y1="0" x2="0" y2="1"><stop offset="0" stop-color="#bcc8d0"/><stop offset="0.3" stop-color="#ccd0d3"/><stop offset="0.72" stop-color="#d2d2d0"/><stop offset="0.8" stop-color="#9fb2be"/><stop offset="0.84" stop-color="#d6b792"/><stop offset="1" stop-color="#d2b18a"/></linearGradient></defs><rect width="36" height="36" fill="url(#gike)"/><path d="M23 16 L34 16 L32 13.5 L25 13.5Z" fill="#c84848"/><rect x="25" y="16" width="7" height="4" fill="#3a80a8"/><rect x="25.5" y="20" width="6" height="6" fill="#d8ccb0"/><rect x="23" y="25" width="10" height="3" fill="#c8c8c4"/></g></svg>
<div class="abs" style="left:856.66px;top:486.25px;line-height:16px;font-size:13px;font-weight:bold;color:#ffffff;-webkit-text-stroke:0.2px #fff;white-space:nowrap">Ikechukwu Damilare</div>
<div class="abs" style="left:856.66px;top:505.51px;line-height:13px;font-size:10.8px;color:#8ba293;white-space:nowrap">@chukslarian</div>
<div class="abs" style="left:808.66px;top:539.74px;line-height:13px;font-size:11px;color:#8ba293;white-space:nowrap">Position</div>
<div class="abs" style="right:38.34px;top:538.05px;height:16px;padding:0 8.4px;border-radius:8px;background:#1f2723;color:#fff;font-size:9.2px;line-height:16px;font-weight:bold;white-space:nowrap">Defender</div>
<div class="abs" style="left:808.66px;top:564.84px;line-height:13px;font-size:11px;color:#8ba293;white-space:nowrap">Team</div>
<div class="abs" style="right:38.34px;top:562.85px;height:16.6px;padding:0 7.6px;border-radius:8.3px;border:1px solid #2a3631;color:#fff;font-size:8.85px;line-height:14.6px;font-weight:bold;white-space:nowrap">Remo Stars FC</div>
<div class="abs" style="left:808.66px;top:590.54px;line-height:13px;font-size:11px;color:#8ba293;white-space:nowrap">Contract</div>
<div class="abs" style="right:38.34px;top:588.65px;height:16px;padding:0 8px;border-radius:8px;background:#02984f;color:#fff;font-size:9.2px;line-height:16px;font-weight:bold;white-space:nowrap">Active</div>
<div class="abs" style="left:808.66px;top:613.75px;width:238px;height:1px;background:#232d28"></div>
<div class="abs" style="left:808.66px;top:621.05px;width:238px;height:26.7px;background:#090d0c;border:1px solid #242f2a;border-radius:5px;color:#f2f4f2;font-size:10.5px;font-weight:bold;line-height:24.7px;text-align:center">View Details</div>
<div class="abs" style="left:213.00px;top:702.5px;width:276.33px;height:225.8px;background:#101713;border:1px solid #25312b;border-radius:6px"></div>
<svg class="abs" style="left:232.00px;top:721.5px" width="36" height="36" viewBox="0 0 36 36"><defs><clipPath id="c6"><circle cx="18" cy="18" r="18"/></clipPath></defs><g clip-path="url(#c6)"><rect width="36" height="36" fill="#c3c3c3"/><path d="M8 30 C8.5 22 12 16.5 18.5 16.5 C24 16.5 27 20 28 24 L30 28 L30 32Z" fill="#4d4d4d"/><path d="M0 27 Q18 24 36 27 L36 36 L0 36Z" fill="#4a4a4a"/></g></svg>
<div class="abs" style="left:280.00px;top:724.00px;line-height:16px;font-size:13px;font-weight:bold;color:#ffffff;-webkit-text-stroke:0.2px #fff;white-space:nowrap">Isaac Xavier</div>
<div class="abs" style="left:280.00px;top:743.26px;line-height:13px;font-size:10.8px;color:#8ba293;white-space:nowrap">@isaac_xavier</div>
<div class="abs" style="left:501.33px;top:702.5px;width:276.33px;height:225.8px;background:#101713;border:1px solid #25312b;border-radius:6px"></div>
<svg class="abs" style="left:520.33px;top:721.5px" width="36" height="36" viewBox="0 0 36 36"><defs><clipPath id="c7"><circle cx="18" cy="18" r="18"/></clipPath></defs><g clip-path="url(#c7)"><rect width="36" height="36" fill="#f1f1f4"/><path d="M9 0 L27 0 L22 12 L14 12Z" fill="#a2a4ab"/><rect x="14" y="0" width="8" height="3" fill="#777a80"/><path d="M0 23 L36 23 L36 36 L0 36Z" fill="#c2c4ca"/><path d="M17.3 23 L18.7 23 L19.2 36 L16.8 36Z" fill="#2a2a2e"/><path d="M13 23 L14 23 L8 36 L6 36Z" fill="#3a3a40"/><path d="M22 23 L23 23 L30 36 L28 36Z" fill="#3a3a40"/><path d="M0 4 L7 4 L7 13 L0 13Z" fill="#8a8d94"/><path d="M29 22 L36 22 L36 32 L29 32Z" fill="#5e6168"/><path d="M0 22 L5 22 L5 32 L0 32Z" fill="#5e6168"/></g></svg>
<div class="abs" style="left:568.33px;top:724.00px;line-height:16px;font-size:13px;font-weight:bold;color:#ffffff;-webkit-text-stroke:0.2px #fff;white-space:nowrap">Kenneth Kalu</div>
<div class="abs" style="left:568.33px;top:743.26px;line-height:13px;font-size:10.8px;color:#8ba293;white-space:nowrap">@kenneth_kalu</div>
<div class="abs" style="left:789.66px;top:702.5px;width:276.33px;height:225.8px;background:#101713;border:1px solid #25312b;border-radius:6px"></div>
<svg class="abs" style="left:808.66px;top:721.5px" width="36" height="36" viewBox="0 0 36 36"><defs><clipPath id="c8"><circle cx="18" cy="18" r="18"/></clipPath></defs><g clip-path="url(#c8)"><rect width="36" height="36" fill="#cbbdaa"/><rect x="0" y="15" width="36" height="16" fill="#e2dcdc"/><path d="M6 33 C6 24 8 11 17 10 C23 10 25 16 25 21 L33 27 L32 33Z" fill="#b48a6c"/><path d="M9 13 C7 16 6 22 8 26 L12 22 C12 18 11 14 9 13Z" fill="#9a6a50"/><ellipse cx="19" cy="18" rx="3.5" ry="2.5" fill="#3a2e30"/><rect x="0" y="31" width="36" height="5" fill="#d8d0d8"/></g></svg>
<div class="abs" style="left:856.66px;top:724.00px;line-height:16px;font-size:13px;font-weight:bold;color:#ffffff;-webkit-text-stroke:0.2px #fff;white-space:nowrap">Kenneth Ogundele</div>
<div class="abs" style="left:856.66px;top:743.26px;line-height:13px;font-size:10.8px;color:#8ba293;white-space:nowrap">@kenneth_ogundele</div>
<div class="abs" style="left:0;top:776px;width:1085px;height:7px;background:#3c3b40"></div>
<div class="abs" style="left:1078px;top:8px;width:7px;height:768px;background:#2f2f30"></div>
<div class="abs" style="left:1080px;top:21px;width:8px;height:238px;background:#a3a3a3;border-radius:4px"></div>
<svg class="abs" style="left:1078px;top:11px" width="7" height="7" viewBox="0 0 7 7"><path d="M5.5 1.5 9 6H2z" fill="#a3a3a3"/></svg>
<svg class="abs" style="left:1078px;top:767px" width="7" height="7" viewBox="0 0 7 7"><path d="M5.5 5.5 9 1H2z" fill="#a3a3a3"/></svg>
</div></body></html>
